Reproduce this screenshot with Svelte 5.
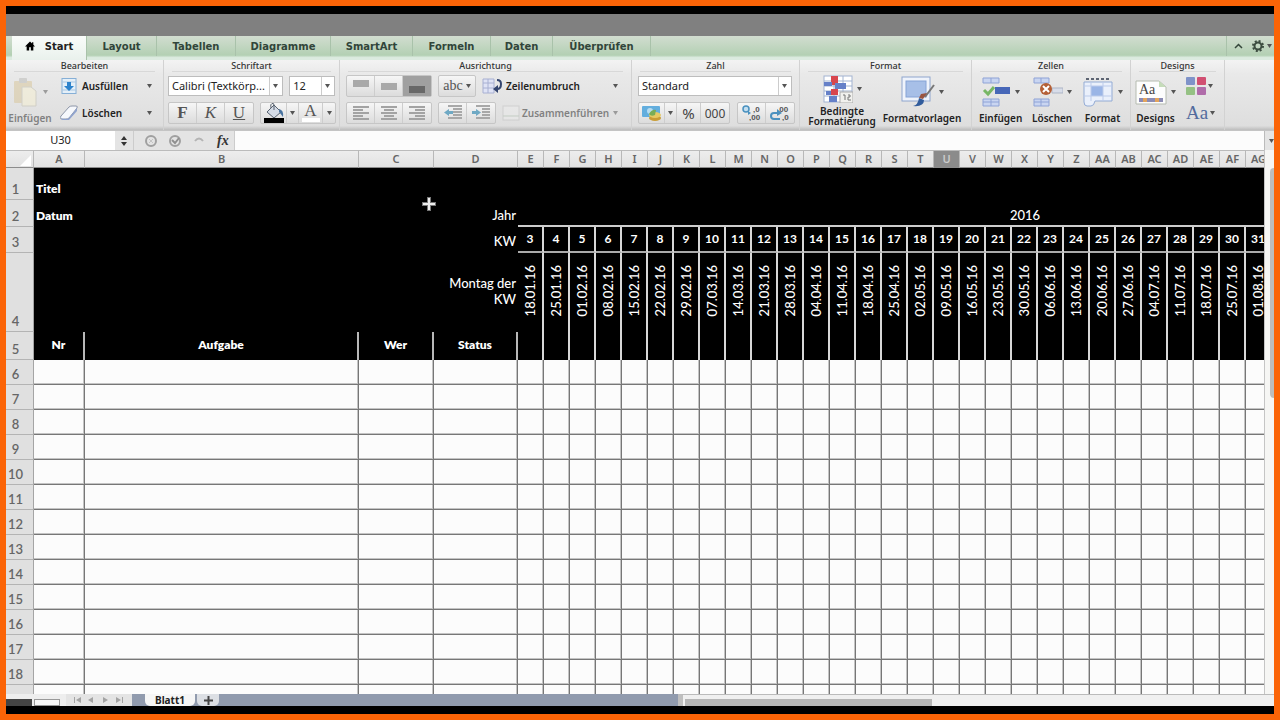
<script>
  const tabs = ['Start', 'Layout', 'Tabellen', 'Diagramme', 'SmartArt', 'Formeln', 'Daten', 'Überprüfen'];
  const letter = (n) => (n < 26 ? '' : 'A') + String.fromCharCode(65 + (n % 26));
  const two = (n) => String(n).padStart(2, '0');

  // One column per calendar week, each labelled with the date of its Monday.
  const weeks = Array.from({ length: 39 }, (_, i) => {
    const d = new Date(2016, 0, 18 + i * 7);
    return { col: letter(i + 4), kw: i + 3, monday: `${two(d.getDate())}.${two(d.getMonth() + 1)}.16` };
  });
  const emptyRows = Array.from({ length: 14 }, (_, i) => i + 6);
</script>

{#snippet arrow()}
  <svg class="arrow" viewBox="0 0 5 4" aria-hidden="true"><path d="M0 0h5L2.500 4z" /></svg>
{/snippet}

<div class="frame">
  <div class="titlebar"></div>

  <nav class="tabs">
    {#each tabs as tab, i}
      <button class="tab t{i}" class:active={i === 0}>
        {#if i === 0}
          <svg class="home" viewBox="0 0 12 11" aria-hidden="true"><path d="M6 0 0 6h2v5h3V7h2v4h3V6h2L10 4V1H8.500v1.500z" /></svg>
        {/if}
        {tab}
      </button>
    {/each}
    <span class="grow"></span>
    <button class="tool" aria-label="Menüband minimieren">
      <svg width="9" height="6" viewBox="0 0 9 6"><path d="M1 5l3.500-3.500L8 5" fill="none" stroke="#34463a" stroke-width="1.500" /></svg>
    </button>
    <button class="tool gear" aria-label="Einstellungen">
      <svg width="12" height="12" viewBox="0 0 12 12"><circle cx="6" cy="6" r="3.500" fill="none" stroke="#3c4c40" stroke-width="2" /><circle cx="6" cy="6" r="5" fill="none" stroke="#3c4c40" stroke-width="2" stroke-dasharray="2 1.930" /></svg>
      {@render arrow()}
    </button>
  </nav>

  <div class="ribbon">
    <section class="group g-edit">
      <h2>Bearbeiten</h2>
      <div class="body">
        <button class="big faded paste">
          <span class="pic">
            <svg width="26" height="30" viewBox="0 0 26 30"><rect x="1" y="4" width="18" height="22" rx="1" fill="#d8c597" /><rect x="6" y="1" width="8" height="5" rx="1" fill="#b9b9b5" /><path d="M9 10h9l5 4v15H9z" fill="#f8f1d2" stroke="#c0bdad" /></svg>
            {@render arrow()}
          </span>
          Einfügen
        </button>
        <div class="stack">
          <button class="item wide">
            <svg width="18" height="16" viewBox="0 0 18 16"><rect x="2" y="0.500" width="14" height="15" fill="#e4eff8" stroke="#86afd6" /><path d="M2 4h14M2 12h14" stroke="#a9c7e2" /><path d="M7 4h4v4h3l-5 5-5-5h3z" fill="#2d83cc" /></svg>
            <span>Ausfüllen</span>{@render arrow()}
          </button>
          <button class="item wide">
            <svg width="18" height="16" viewBox="0 0 18 16"><path d="M1 11 9 2q1-1 3-1h4q2 0 1 2l-8 10q-1 1-3 1H2q-3 0-1-3z" fill="#f6f8fc" stroke="#8d96a8" /><path d="M1 12q0 2 2 2h3q2 0 3-1l8-10v3L9 15H3q-2 0-2-3z" fill="#8fa3cf" /></svg>
            <span>Löschen</span>{@render arrow()}
          </button>
        </div>
      </div>
    </section>

    <section class="group g-font">
      <h2>Schriftart</h2>
      <div class="body stack">
        <div class="row">
          <label class="pick family"><select aria-label="Schriftart"><option>Calibri (Textkörp...</option></select>{@render arrow()}</label>
          <label class="pick size"><select aria-label="Schriftgrad"><option>12</option></select>{@render arrow()}</label>
        </div>
        <div class="row split">
          <div class="bar">
            <button class="glyph b">F</button><button class="glyph i">K</button><button class="glyph u">U</button>
          </div>
          <div class="bar">
            <button class="colour" aria-label="Füllfarbe"><svg width="22" height="20" viewBox="0 0 22 20"><path d="M4 9 11 2l7 7-7 6z" fill="#d4dbe6" stroke="#57616f" /><path d="M11 7V2q0-2-2-1.500T8 5" fill="none" stroke="#57616f" /><path d="M16 6q5 1 4 8-2-3-4-5z" fill="#47729f" /><rect x="1" y="15" width="20" height="5" /></svg></button>
            <button class="slim" aria-label="Füllfarbe wählen">{@render arrow()}</button>
            <button class="glyph a"><span>A</span></button>
            <button class="slim" aria-label="Schriftfarbe wählen">{@render arrow()}</button>
          </div>
        </div>
      </div>
    </section>

    <section class="group g-align">
      <h2>Ausrichtung</h2>
      <div class="body stack">
        <div class="row">
          <div class="bar three">
            {#each [2, 5, 8] as y, i}
              <button class:on={i === 2} aria-label="Vertikal {i + 1}"><svg width="18" height="16" viewBox="0 0 18 16"><rect x="1" {y} width="16" height="7" fill={i === 2 ? '#686868' : '#a9a9a9'} /></svg></button>
            {/each}
          </div>
          <div class="bar"><button class="glyph abc">abc{@render arrow()}</button></div>
          <button class="item wrap">
            <svg width="22" height="18" viewBox="0 0 22 18"><path d="M1 2h11v14H1z" fill="#dfe3f5" stroke="#a8b0d2" /><path d="M1 6h11M1 11h11M6 2v14" stroke="#a8b0d2" /><path d="M15 3q4 0 4 4 0 5-4 5" fill="none" stroke="#34456f" stroke-width="2" /><path d="M16 8v8l-5-4z" fill="#34456f" /></svg>
            <span>Zeilenumbruch</span>{@render arrow()}
          </button>
        </div>
        <div class="row">
          <div class="bar three">
            {#each [1, 4, 7] as b, i}
              <button aria-label="Horizontal {i + 1}"><svg width="18" height="16" viewBox="0 0 18 16"><path d="M1 2h16M{b} 5h10M1 8h16M{b} 11h10M1 14h16" stroke="#a3a3a3" stroke-width="2" /></svg></button>
            {/each}
          </div>
          <div class="bar two">
            <button aria-label="Einzug verkleinern"><svg width="20" height="16" viewBox="0 0 20 16"><path d="M5 1h14M10 4h9M10 7h9M10 10h9M5 13h14" stroke="#a8a8a8" stroke-width="2" /><path d="M1 7.500 6 4v2h4v3H6v2z" fill="#6fa9c4" /></svg></button>
            <button aria-label="Einzug vergrößern"><svg width="20" height="16" viewBox="0 0 20 16"><path d="M5 1h14M11 4h8M11 7h8M11 10h8M5 13h14" stroke="#a8a8a8" stroke-width="2" /><path d="M10 7.500 5 4v2H1v3h4v2z" fill="#6fa9c4" /></svg></button>
          </div>
          <button class="item merge faded">
            <svg width="18" height="16" viewBox="0 0 18 16"><rect x="1" y="1" width="16" height="14" fill="#ececec" stroke="#c0c0c0" /><path d="M1 11h16" stroke="#a9bba9" /></svg>
            <span>Zusammenführen</span>{@render arrow()}
          </button>
        </div>
      </div>
    </section>

    <section class="group g-num">
      <h2>Zahl</h2>
      <div class="body stack">
        <div class="row"><label class="pick number"><select aria-label="Zahlenformat"><option>Standard</option></select>{@render arrow()}</label></div>
        <div class="row split">
          <div class="bar">
            <button class="money" aria-label="Währung"><svg width="20" height="17" viewBox="0 0 20 17"><rect x="0" y="1" width="18" height="11" rx="1" fill="#63aede" /><circle cx="8" cy="6" r="3" fill="#b7dcf0" /><ellipse cx="13" cy="13" rx="6" ry="3" fill="#c99c35" /><ellipse cx="13" cy="10" rx="6" ry="3" fill="#e6ca63" /><path d="M7 9q3-5 7-4l-1 5q-4 2-6-1z" fill="#78ad57" /></svg></button>
            <button class="slim" aria-label="Währung wählen">{@render arrow()}</button>
            <button class="sym pct">%</button>
            <button class="sym">000</button>
          </div>
          <div class="bar two">
            <button class="dec" aria-label="Dezimalstelle hinzufügen"><svg width="20" height="16" viewBox="0 0 20 16"><circle cx="4" cy="4" r="3" fill="#c3def0" stroke="#4a91bf" stroke-width="1.500" /><path d="M6 6l3 2-3 2z" fill="#4a91bf" /><text x="11" y="7">,0</text><text x="7" y="15">,00</text></svg></button>
            <button class="dec" aria-label="Dezimalstelle löschen"><svg width="20" height="16" viewBox="0 0 20 16"><text x="7" y="7">,00</text><text x="12" y="15">,0</text><path d="M8 8H4q-3 0-3 3t3 3h6" fill="none" stroke="#4a91bf" stroke-width="2" /><path d="M7 4l5 4-5 3z" fill="#4a91bf" /></svg></button>
          </div>
        </div>
      </div>
    </section>

    <section class="group g-format">
      <h2>Format</h2>
      <div class="body">
        <button class="big cond">
          <span class="pic">
            <svg width="30" height="28" viewBox="0 0 30 28"><rect x="1" y="1" width="28" height="26" fill="#fff" stroke="#a3b4d1" /><path d="M1 6h28M1 11h28M1 16h28M1 21h28M11 1v26M20 1v26" stroke="#a3b4d1" /><path d="M8 1h7v9H8zM8 14h7v6H8z" fill="#d8464e" /><path d="M1 7h8v4H1zM12 8h11v6H12zM3 16h5v4H3zM6 21h8v6H6z" fill="#6580c8" /><path d="M17 17h13v11H17z" fill="#f1f1ee" stroke="#aaa" /><path d="M20 20h2v5M25 20h2v2h-2v3h3" fill="none" stroke="#777" /></svg>
            {@render arrow()}
          </span>
          Bedingte<br />Formatierung
        </button>
        <button class="big styles">
          <span class="pic">
            <svg width="34" height="32" viewBox="0 0 34 32"><rect x="1" y="1" width="28" height="24" fill="#eff3fb" stroke="#8fa6ce" /><rect x="5" y="5" width="20" height="16" fill="#a7bfe7" stroke="#86a3d6" /><path d="M33 9 24 21" stroke="#777" stroke-width="2" /><path d="M26 17l-4 6-4-1 2-4z" fill="#9a5540" /><path d="M12 30q5-1 6-8l5 2q0 7-11 6z" fill="#315c9c" /></svg>
            {@render arrow()}
          </span>
          Formatvorlagen
        </button>
      </div>
    </section>

    <section class="group g-cells">
      <h2>Zellen</h2>
      <div class="body">
        <button class="big">
          <span class="pic">
            <svg width="30" height="30" viewBox="0 0 30 30"><path d="M2 1h16v5H2zM2 22h16v7H2zM10 1v5M10 22v7M2 25h16" fill="#c9d5f1" stroke="#8fa3d6" /><rect x="14" y="10" width="15" height="7" fill="#4767b8" /><path d="M3 13l4 4 6-7" fill="none" stroke="#78b765" stroke-width="3" /></svg>
            {@render arrow()}
          </span>
          Einfügen
        </button>
        <button class="big">
          <span class="pic">
            <svg width="30" height="30" viewBox="0 0 30 30"><path d="M1 1h15v5H1zM1 22h15v7H1zM8 1v5M8 22v7M1 25h15" fill="#c9d5f1" stroke="#8fa3d6" /><path d="M19 11h11v5H19z" fill="#d8dde9" stroke="#adb5c6" /><circle cx="13" cy="12" r="6" fill="#b45f36" /><path d="M10 9l6 6M16 9l-6 6" stroke="#fff" stroke-width="2" /></svg>
            {@render arrow()}
          </span>
          Löschen
        </button>
        <button class="big">
          <span class="pic">
            <svg width="32" height="30" viewBox="0 0 32 30"><path d="M4 2h24" stroke="#5d6472" stroke-width="2" stroke-dasharray="3 2" /><path d="M2 5h28v19H13q-1 5-4 5H5q-3 0-3-4z" fill="#eaf0fb" stroke="#93abd4" /><path d="M9 9h12v10H9z" fill="#9ab5e6" /><path d="M2 9h28M2 19h28M9 5v19M21 5v19" stroke="#bccbea" /></svg>
            {@render arrow()}
          </span>
          Format
        </button>
      </div>
    </section>

    <section class="group g-design">
      <h2>Designs</h2>
      <div class="body">
        <button class="big">
          <span class="pic">
            <svg width="32" height="28" viewBox="0 0 32 28"><path d="M1 3h23l7 6v17H1z" fill="#fdfdfd" stroke="#b5bbb0" /><path d="M24 3v6h7z" fill="#c5dcb9" /><text x="4" y="16" class="serif">Aa</text><path d="M4 22h24" stroke="#8b8bb4" stroke-width="4" /><path d="M8 22h4M20 22h4" stroke="#e2a45d" stroke-width="4" /></svg>
            {@render arrow()}
          </span>
          Designs
        </button>
        <div class="stack mini">
          <button aria-label="Designfarben"><svg width="20" height="18" viewBox="0 0 20 18"><rect width="9" height="8" rx="1" fill="#7f93c9" /><rect x="11" width="9" height="8" rx="1" fill="#d14f72" /><rect y="10" width="9" height="8" rx="1" fill="#95c184" /><rect x="11" y="10" width="9" height="8" rx="1" fill="#b06caa" /></svg>{@render arrow()}</button>
          <button class="fonts">Aa{@render arrow()}</button>
        </div>
      </div>
    </section>
  </div>

  <div class="formula">
    <input class="name" aria-label="Namenfeld" value="U30" />
    <button class="step" aria-label="Zellname wählen"><svg width="6" height="10" viewBox="0 0 6 10"><path d="M0 4l3-4 3 4zM0 6l3 4 3-4z" fill="#333" /></svg></button>
    <div class="fx">
      <svg width="12" height="12" viewBox="0 0 12 12"><circle cx="6" cy="6" r="5" fill="none" stroke="#a0a0a0" stroke-width="2" /><path d="M4 4l4 4M8 4L4 8" stroke="#c4c4c4" /></svg>
      <svg width="12" height="12" viewBox="0 0 12 12"><circle cx="6" cy="6" r="5" fill="none" stroke="#a0a0a0" stroke-width="2" /><path d="M3 5l3 3 4-5" fill="none" stroke="#8f8f8f" stroke-width="2" /></svg>
      <svg width="12" height="12" viewBox="0 0 12 12"><path d="M2 6q4-5 8 0" fill="none" stroke="#b4b4b4" stroke-width="2" /></svg>
      <i>fx</i>
    </div>
    <input class="value" aria-label="Formel" />
    <button class="more" aria-label="Bearbeitungsleiste erweitern">{@render arrow()}</button>
  </div>

  <main>
    <div class="sheet">
      <table>
        <colgroup>
          <col class="c-row" /><col class="c-a" /><col class="c-b" /><col class="c-c" /><col class="c-d" />
          {#each weeks as w}<col class="c-w" />{/each}
        </colgroup>
        <thead>
          <tr>
            <th class="corner"><svg width="11" height="11" viewBox="0 0 11 11" aria-hidden="true"><path d="M11 0v11H0z" fill="#fff" /></svg></th>
            <th>A</th><th>B</th><th>C</th><th>D</th>
            {#each weeks as w}<th class:sel={w.col === 'U'}>{w.col}</th>{/each}
          </tr>
        </thead>
        <tbody class="head">
          <tr class="r1"><th>1</th><td class="strong" colspan="4">Titel</td><td colspan={weeks.length}></td></tr>
          <tr class="r2"><th>2</th><td class="strong" colspan="3">Datum</td><td class="right">Jahr</td><td class="year" colspan={weeks.length}>2016</td></tr>
          <tr class="r3"><th>3</th><td colspan="3"></td><td class="right">KW</td>{#each weeks as w}<td class="kw">{w.kw}</td>{/each}</tr>
          <tr class="r4"><th>4</th><td colspan="3"></td><td class="right mid">Montag der KW</td>{#each weeks as w}<td class="date"><span>{w.monday}</span></td>{/each}</tr>
          <tr class="r5"><th>5</th><td class="label">Nr</td><td class="label">Aufgabe</td><td class="label">Wer</td><td class="label">Status</td>{#each weeks as w}<td class="week"></td>{/each}</tr>
        </tbody>
        <tbody class="grid">
          {#each emptyRows as n}
            <tr><th>{n}</th><td></td><td></td><td></td><td></td>{#each weeks as w}<td></td>{/each}</tr>
          {/each}
        </tbody>
      </table>
      <svg class="cursor" viewBox="0 0 16 16" aria-hidden="true"><path d="M8 1v14M1 8h14" stroke="#777" stroke-width="4" /><path d="M8 2v12M2 8h12" stroke="#eee" stroke-width="2" /></svg>
    </div>
    <div class="vscroll"><span></span></div>
  </main>

  <footer>
    <div class="views"><span></span><span></span></div>
    <div class="moves">
      <svg width="52" height="8" viewBox="0 0 52 8" aria-hidden="true"><path d="M1 1h1v6H1zM8 1v6L3 4zM20 1v6l-5-3zM30 1v6l5-3zM43 1v6l5-3zM49 1h1v6h-1z" fill="#a3a3a3" /></svg>
    </div>
    <button class="leaf">Blatt1</button>
    <button class="add" aria-label="Blatt einfügen"><svg width="9" height="9" viewBox="0 0 9 9"><path d="M4.500 0v9M0 4.500h9" stroke="#444" stroke-width="2" /></svg></button>
    <div class="grow"></div>
    <div class="hscroll"><span></span></div>
  </footer>
</div>

<style>
  :global(body) { background: #fb6407; }
  * { box-sizing: border-box; }
  .frame {
    display: flex; flex-direction: column; height: 100vh; overflow: hidden;
    border: 6px solid #fb6407; background: #000; padding: 8px 0;
    font-family: "Noto Sans", sans-serif; font-size: 11px; color: #222;
  }
  button, select, input { font: inherit; color: inherit; border: 0; padding: 0; margin: 0; background: none; border-radius: 0; }
  h2 { margin: 0; }
  svg { display: block; flex: none; }
  .arrow { width: 5px; height: 4px; fill: #555; }
  .grow { flex: 1; }
  .titlebar { flex: none; height: 22px; background: #808080; }

  .tabs { display: flex; flex: none; height: 24px; padding-left: 6px; background: linear-gradient(#d2ddd0, #b3d0b3 80%, #dcebe0 90%); }
  .tab { display: flex; align-items: center; justify-content: center; height: 20px; font-family: "DejaVu Sans", sans-serif; font-size: 10px; font-weight: bold; color: #31453a; border-right: 1px solid #a9c2aa; }
  .tab.active { gap: 10px; height: 24px; padding-bottom: 4px; background: linear-gradient(#fafcfa, #e9f1ec); color: #222; }
  .home { width: 10px; height: 10px; }
  .t0 { width: 75px; } .t1 { width: 70px; } .t2 { width: 79px; } .t3 { width: 95px; }
  .t4 { width: 82px; } .t5 { width: 78px; } .t6 { width: 62px; } .t7 { width: 98px; }
  .tool { display: flex; align-items: center; justify-content: center; width: 24px; height: 20px; border-left: 1px solid #a9c2aa; }
  .gear { gap: 3px; border: 0; }

  .ribbon { display: flex; flex: none; height: 71px; background: linear-gradient(#f3f3f3, #e9e9e9 20%, #dedede 94%, #bdbdbd); border-bottom: 1px solid #c4c4c4; }
  .group { flex: none; border-right: 1px solid #d2d2d2; }
  .group h2 { height: 12px; margin: 0 8px; font-size: 9px; line-height: 12px; font-weight: 500; text-align: center; color: #333; border-bottom: 1px solid #d8d8d8; }
  .body { display: flex; height: 54px; padding-top: 3px; }
  .stack { display: flex; flex-direction: column; gap: 5px; }
  .row { display: flex; align-items: center; height: 22px; gap: 6px; }
  .split { justify-content: space-between; }
  .g-edit { width: 158px; } .g-font { width: 176px; } .g-align { width: 292px; } .g-num { width: 168px; }
  .g-format { width: 172px; } .g-cells { width: 159px; } .g-design { width: 94px; }
  .g-font .body { padding-left: 4px; padding-right: 4px; }
  .g-align .body { padding-left: 6px; }
  .g-num .body { padding-left: 6px; padding-right: 4px; }
  .g-format .body { gap: 4px; padding-left: 6px; }
  .g-cells .body { justify-content: space-around; padding: 3px 2px 0; }
  .g-design .body { gap: 10px; padding-left: 4px; }

  .item { display: flex; align-items: center; height: 22px; gap: 6px; font-size: 10px; font-weight: 600; }
  .item span { flex: 1; text-align: left; }
  .wide { width: 92px; gap: 4px; }
  .wrap { width: 136px; gap: 2px; }
  .merge { width: 116px; gap: 2px; }
  .faded { opacity: 0.5; }
  .big { display: flex; flex-direction: column; align-items: center; font-size: 10px; font-weight: 600; line-height: 10px; white-space: nowrap; }
  .pic { display: flex; align-items: center; gap: 4px; height: 34px; margin-bottom: 4px; }
  .paste { width: 48px; margin-right: 6px; }
  .cond { width: 72px; }
  .cond .pic { height: 29px; margin-bottom: 3px; }
  .styles { width: 80px; }

  .pick { position: relative; display: flex; height: 20px; background: #fff; border: 1px solid #bdbdbd; }
  .pick select { appearance: none; width: 100%; padding: 0 14px 2px 3px; }
  .pick::after { content: ""; position: absolute; top: 0; right: 12px; height: 100%; border-left: 1px solid #ccc; }
  .pick .arrow { position: absolute; right: 4px; top: 7px; pointer-events: none; }
  .family { width: 116px; } .size { width: 46px; } .number { width: 154px; }
  .bar { display: flex; height: 22px; border: 1px solid #c6c6c6; border-radius: 2px; background: linear-gradient(#f6f6f6, #dcdcdc); }
  .bar button { display: flex; align-items: center; justify-content: center; width: 28px; border-right: 1px solid #cdcdcd; }
  .bar button:last-child { border-right: 0; }
  .bar .on { background: #a0a0a0; }
  .bar .slim { width: 12px; }
  .bar .glyph { font-family: "Liberation Serif", serif; font-size: 17px; color: #555; }
  .bar .b { font-weight: bold; } .bar .i { font-style: italic; } .bar .u { text-decoration: underline; }
  .bar .colour { width: 26px; } .bar .a { width: 24px; }
  .a span { width: 18px; line-height: 14px; border-bottom: 4px solid #fff; }
  .bar .abc { width: 36px; gap: 3px; font-size: 14px; }
  .bar .sym { font-size: 12px; color: #444; } .bar .pct { width: 24px; font-size: 15px; }
  .bar .money { width: 26px; }
  .dec text { font: bold 8px "Liberation Sans", sans-serif; fill: #555; }
  .serif { font: 14px "Liberation Serif", serif; fill: #444; }
  .mini button { display: flex; align-items: center; gap: 2px; height: 22px; }
  .mini .fonts { font-family: "Liberation Serif", serif; font-size: 19px; color: #536b9d; }

  .formula { display: flex; flex: none; height: 19px; background: #e4e4e4; }
  .name { width: 109px; text-align: center; background: #fff; padding-bottom: 2px; }
  .step { display: flex; align-items: center; justify-content: center; width: 18px; }
  .fx { display: flex; align-items: center; gap: 12px; width: 101px; padding-left: 11px; border-left: 1px solid #ccc; }
  .fx i { font: italic bold 14px "Liberation Serif", serif; color: #333; }
  .value { flex: 1; min-width: 0; padding: 0 4px; background: #fcfcfc; border-left: 1px solid #ccc; }
  .more { display: flex; align-items: center; justify-content: flex-end; width: 10px; border-left: 1px solid #bbb; }

  main { display: flex; flex: 1; min-height: 0; background: #fff; }
  .sheet { position: relative; flex: 1; min-width: 0; overflow: hidden; }
  table { table-layout: fixed; width: 1525px; border-spacing: 0; font-family: Lato, sans-serif; }
  .c-row { width: 28px; } .c-a { width: 51px; } .c-b { width: 274px; } .c-c { width: 75px; } .c-d { width: 84px; } .c-w { width: 26px; }
  th, td { padding: 0; overflow: hidden; }
  thead th { height: 18px; font: 600 11px/16px "Noto Sans", sans-serif; color: #666; background: linear-gradient(#ededed, #e2e2e2); border-right: 1px solid #b8b8b8; border-bottom: 1px solid #8c8c8c; border-top: 1px solid #bbb; }
  .corner svg { margin: 3px 2px 0 auto; }
  thead .sel { color: #ccc; background: #8b8b8b; }
  tbody th { height: 25px; padding: 0 8px 2px 0; vertical-align: bottom; font: 600 13px/16px Lato, sans-serif; color: #666; text-align: center; background: #e0e0e0; border-right: 1px solid #a5a5a5; border-bottom: 1px solid #b4b4b4; }
  .head td { font-size: 13px; font-weight: 500; line-height: 16px; color: #fff; background: #000; vertical-align: bottom; padding: 0 2px 3px; }
  .head .strong { font-size: 12px; font-weight: 800; }
  .r1 th { height: 32px; } .r2 th { height: 27px; } .r3 th { height: 26px; } .r4 th { height: 79px; } .r5 th { height: 28px; }
  .head .right { text-align: right; padding-bottom: 4px; }
  .head .mid { vertical-align: middle; }
  .head .year { text-align: center; padding-bottom: 2px; border-bottom: 2px solid #ccc; }
  .head .kw { font-size: 12px; font-weight: bold; text-align: center; vertical-align: middle; padding: 0; border-right: 2px solid #d8d8d8; border-bottom: 2px solid #aaa; }
  .head .date { text-align: center; vertical-align: middle; padding: 0 0 4px; border-right: 2px solid #d8d8d8; }
  .date span { display: inline-block; vertical-align: middle; writing-mode: vertical-rl; transform: rotate(180deg); line-height: 16px; }
  .head .week { border-right: 2px solid #d8d8d8; }
  .head .label { font-size: 12px; font-weight: 800; text-align: center; vertical-align: middle; border-right: 2px solid #b8b8b8; }
  .grid td { background: #fcfcfc; border-right: 1px solid #777; border-bottom: 1px solid #777; box-shadow: inset -1px -1px #c4c4c4; }
  .cursor { position: absolute; left: 415px; top: 46px; width: 16px; height: 16px; }
  .vscroll { flex: none; width: 10px; padding: 18px 0 0 5px; background: #f6f6f4; border-left: 1px solid #c5c5c5; }
  .vscroll span { display: block; height: 230px; background: #bdbdbd; border-radius: 4px 0 0 4px; }

  footer { display: flex; flex: none; height: 12px; overflow: hidden; background: #919bae; }
  .views { display: flex; align-items: flex-end; gap: 2px; width: 60px; background: #eee; }
  .views span { width: 26px; height: 7px; background: #444; }
  .views span + span { background: #f8f8f8; border: 1px solid #999; }
  .moves { display: flex; align-items: center; justify-content: center; width: 66px; background: #e4e4e4; margin-right: 13px; }
  .leaf { width: 50px; font-size: 10px; line-height: 12px; font-weight: bold; background: #f6f6f6; border-radius: 0 0 5px 5px; }
  .add { display: flex; align-items: center; justify-content: center; width: 22px; margin-left: 2px; background: #dcdfe4; border-radius: 0 0 5px 5px; }
  .hscroll { width: 47%; padding: 4px 0 0 2px; background: #f0f0f0; border-left: 5px solid #bfbfbf; border-top: 1px solid #bbb; }
  .hscroll span { display: block; width: 42%; height: 8px; background: #b6b6b6; }
</style>
